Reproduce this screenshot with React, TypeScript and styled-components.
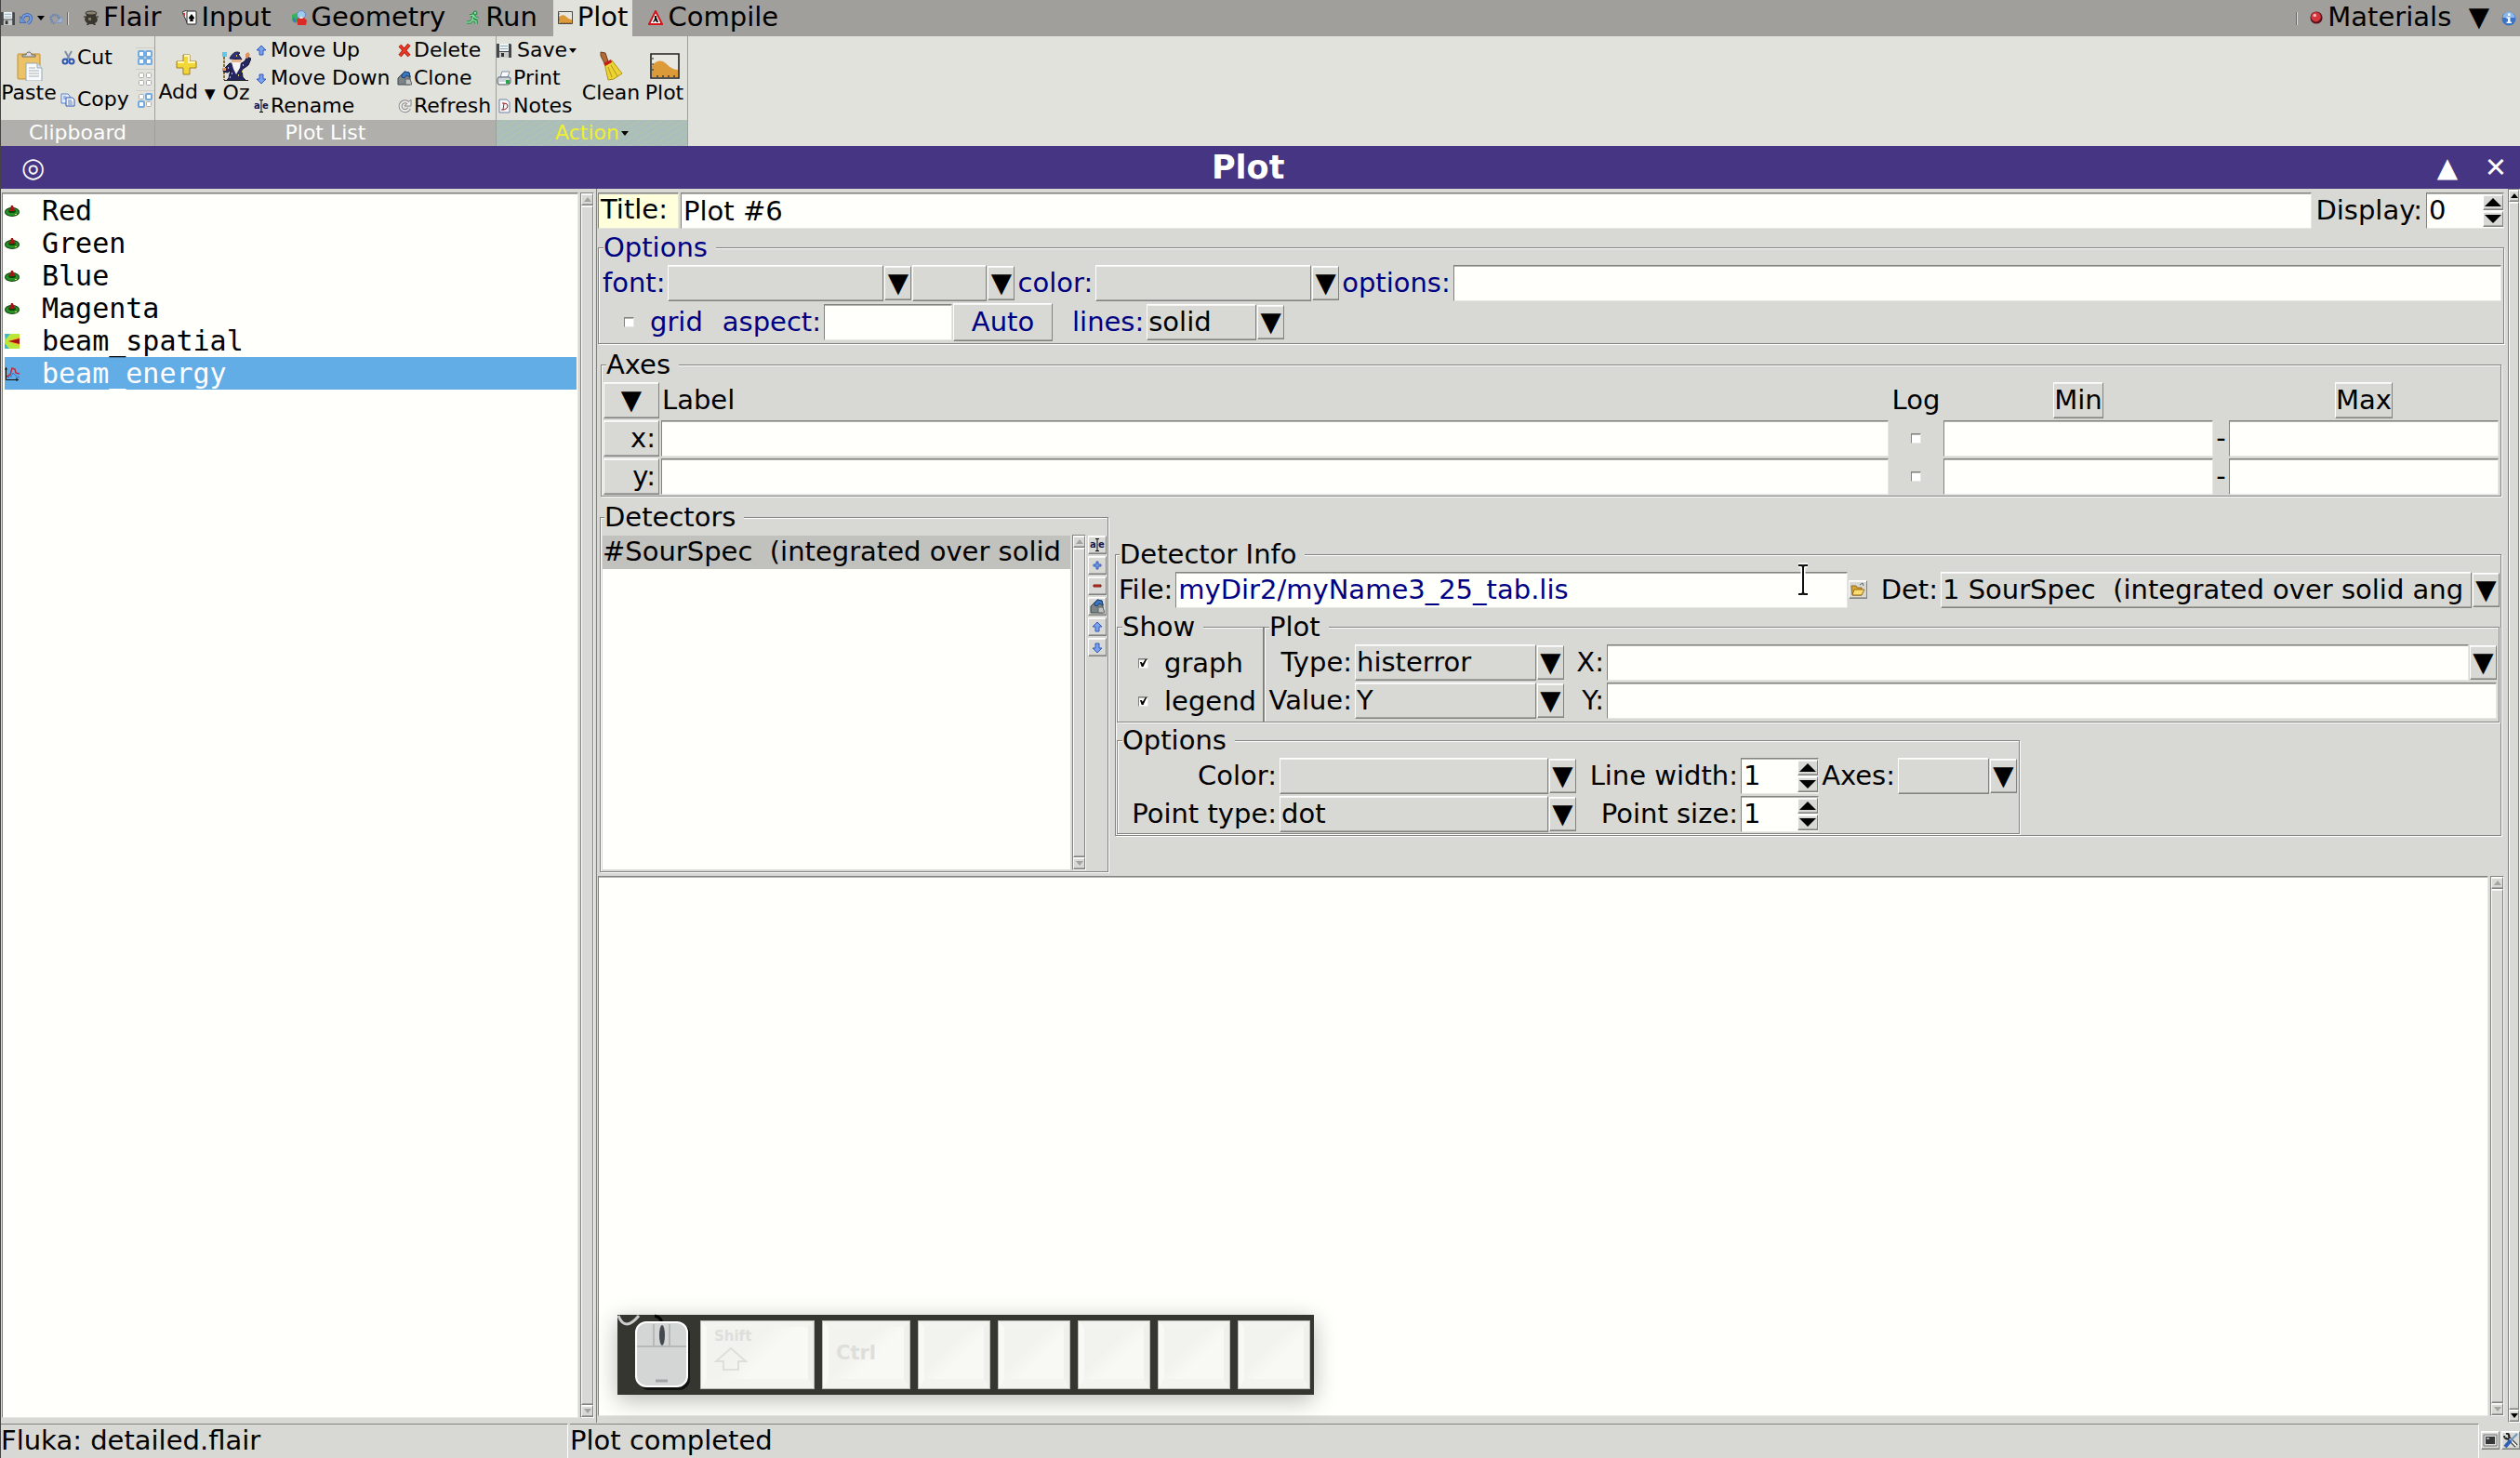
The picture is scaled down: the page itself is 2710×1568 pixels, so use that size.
import React, { useRef, useState } from 'react';
import styled, { createGlobalStyle, css } from 'styled-components';

const face = '#d8d9d5';
const paper = '#fffffb';
const dark = '#82827f';
const navy = '#000083';

const GlobalStyle = createGlobalStyle`
  * {
    box-sizing: border-box;
  }
  body {
    margin: 0;
    background: ${face};
    overflow: hidden;
  }
  body, button, input, select {
    font-family: 'DejaVu Sans', sans-serif;
    font-size: 29px;
    line-height: 35px;
    color: #000;
  }
  button, input, select, fieldset, legend, ul {
    margin: 0;
    padding: 0;
    border: 0;
    border-radius: 0;
    outline: 0;
  }
`;

const raised = css`
  border: 1px solid;
  border-color: #fff ${dark} ${dark} #fff;
  box-shadow: inset 0 1px #f4f4f2, inset 0 -1px #a5a5a2;
`;

const sunken = css`
  border: 1px solid;
  border-color: ${dark} #e6e6e2 #e6e6e2 ${dark};
  box-shadow: inset 0 1px #b4b4b0;
`;

// ------
// Layout
// ------

const Window = styled.div`
  position: relative;
  display: flex;
  flex-direction: column;
  height: 100vh;
  border-left: 1px solid #444;
  background: ${face};
  white-space: pre;
`;

const TabBar = styled.nav`
  display: flex;
  align-items: center;
  height: 39px;
  background: #a09f9b;
`;

const QuickTools = styled.div`
  display: flex;
  align-items: center;
  gap: 5px;
  width: 84px;
`;

const Tabs = styled.div`
  display: flex;
  flex: 1;
  gap: 12px;
`;

const Tab = styled.button<{ $active?: boolean }>`
  display: flex;
  align-items: center;
  gap: 5px;
  height: 39px;
  padding: 0 5px 2px;
  background: ${(p) => (p.$active ? '#e2e2dc' : 'transparent')};
`;

const ToolButton = styled.button`
  display: flex;
  background: none;
`;

const TabRule = styled.span`
  width: 2px;
  height: 14px;
  background: #666;
  border-right: 1px solid #ddd;
`;

const TabRight = styled.div`
  display: flex;
  align-items: center;
  gap: 8px;
  padding-right: 4px;
`;

const Ribbon = styled.div`
  display: flex;
  height: 118px;
  background: #e2e2dc;
`;

const Group = styled.section<{ $width: number }>`
  display: flex;
  flex-direction: column;
  width: ${(p) => p.$width}px;
  border-right: 1px solid #a09f9b;
`;

const GroupBody = styled.div`
  display: flex;
  height: 90px;
`;

const GroupLabel = styled.div<{ $hot?: boolean }>`
  display: flex;
  justify-content: center;
  align-items: center;
  gap: 2px;
  height: 28px;
  font-size: 22px;
  line-height: 26px;
  color: ${(p) => (p.$hot ? '#efef2c' : '#fff')};
  background: ${(p) =>
    p.$hot
      ? 'repeating-linear-gradient(150deg, #adbdbb 0 5px, #a9c9a9 5px 6px)'
      : '#b0afab'};
`;

const BigButton = styled.button<{ $width: number }>`
  display: flex;
  flex-direction: column;
  align-items: center;
  justify-content: center;
  width: ${(p) => p.$width}px;
  background: none;
  font-size: 22px;
  line-height: 26px;
`;

const Small = styled.small`
  font-size: 15px;
`;

const ButtonColumn = styled.div<{ $width: number }>`
  display: flex;
  flex-direction: column;
  justify-content: space-around;
  width: ${(p) => p.$width}px;
`;

const RibbonButton = styled.button`
  display: flex;
  align-items: center;
  gap: 2px;
  background: none;
  font-size: 22px;
  line-height: 26px;
`;

const SaveText = styled.span`
  padding-left: 4px;
`;

const SelectColumn = styled.div`
  display: flex;
  flex-direction: column;
  justify-content: center;
  gap: 2px;
  width: 20px;

  button {
    justify-content: center;
    border-top: 1px solid #cfcfca;
    padding: 2px 0;
  }
`;

const PageBar = styled.header`
  display: flex;
  align-items: center;
  height: 46px;
  padding: 0 10px 0 22px;
  background: #453582;
  color: #fff;
`;

const PageTitle = styled.h1`
  flex: 1;
  margin: 0;
  padding-left: 40px;
  text-align: center;
  font-size: 35px;
  line-height: 44px;
`;

const PageButton = styled.button`
  width: 32px;
  margin-left: 20px;
  background: none;
  color: #fff;
  font-weight: bold;
`;

const Main = styled.main`
  display: flex;
  flex: 1;
  min-height: 0;
`;

const PlotPane = styled.div`
  display: flex;
  flex: none;
  gap: 2px;
  width: 640px;
  padding: 4px 2px 5px 1px;
`;

const PlotList = styled.ul`
  ${sunken}
  flex: 1;
  padding: 1px 1px 1px 2px;
  background: ${paper};
  list-style: none;
  font-family: 'DejaVu Sans Mono', monospace;
  font-size: 30px;
`;

const PlotItem = styled.li<{ $selected?: boolean }>`
  display: flex;
  align-items: center;
  gap: 24px;
  height: 35px;
  color: ${(p) => (p.$selected ? '#fff' : '#000')};
  background: ${(p) => (p.$selected ? '#62ade6' : 'transparent')};
`;

const EditPane = styled.div`
  display: flex;
  flex: 1;
  flex-direction: column;
  min-width: 0;
  padding: 4px 4px 7px 1px;
  border-left: 1px solid ${dark};
`;

const Row = styled.div`
  display: flex;
  align-items: center;
  gap: 1px;
`;

const TitleRow = styled(Row)`
  gap: 2px;
  margin-bottom: 3px;
`;

const Frame = styled.fieldset<{ $navy?: boolean }>`
  min-width: 0;
  padding: 1px 2px;
  border: 1px solid ${dark};
  box-shadow: 1px 1px #fff, inset 1px 1px #fff;
  color: ${(p) => (p.$navy ? navy : '#000')};
`;

const Legend = styled.legend`
  height: 35px;
  margin-left: 3px;
  padding-right: 9px;
  background: ${face};
`;

const OptionRow = styled(Row)`
  min-height: 39px;
  margin-bottom: 1px;

  & + & {
    margin-top: 2px;
  }
`;

const Label = styled.label`
  flex: none;
  padding: 0 2px;
  color: inherit;
`;

const TitleLabel = styled(Label)`
  ${sunken}
  width: 87px;
  height: 39px;
  background: #ffffdc;
`;

const Entry = styled.input<{ $width?: number }>`
  ${sunken}
  width: ${(p) => (p.$width ? `${p.$width}px` : '100%')};
  min-width: 0;
  height: 39px;
  padding: 0 2px;
  background: ${paper};
  color: ${(p) => (p.color ? p.color : '#000')};
`;

const Button = styled.button`
  ${raised}
  height: 39px;
  background: ${face};
  color: inherit;
`;

const AutoButton = styled(Button)`
  width: 107px;
  height: 41px;
  margin-right: 18px;
`;

const AxesFrame = styled(Frame)`
  margin: 5px 3px;
`;

const AxesGrid = styled.div`
  display: grid;
  grid-template-columns: 60px 1fr 55px 290px 13px 290px;
  gap: 2px;
  align-items: center;
  justify-items: center;
`;

const AxisButton = styled(Button)`
  width: 60px;
  text-align: right;
  padding-right: 3px;
`;

const MenuButton = styled(Button)`
  width: 60px;
`;

const Heading = styled.span`
  justify-self: start;
  padding-left: 1px;
`;

const DetectorArea = styled.div`
  display: flex;
  align-items: center;
  gap: 7px;
  margin: 0 3px 4px 2px;
`;

const DetectorFrame = styled(Frame)`
  flex: 0 0 547px;
  padding: 1px;
`;

const DetectorBody = styled.div`
  display: flex;
  gap: 1px;
  height: 361px;
`;

const DetectorList = styled.ul`
  flex: 1;
  min-width: 0;
  overflow: hidden;
  background: ${paper};
  list-style: none;
  border: 1px solid ${face};
`;

const DetectorItem = styled.li`
  height: 36px;
  background: #c1c1be;
`;

const IconColumn = styled.div`
  display: flex;
  flex-direction: column;
  gap: 2px;
  padding: 1px 0 0 1px;
`;

const IconButton = styled(Button)`
  display: flex;
  flex: none;
  align-items: center;
  justify-content: center;
  width: 20px;
  height: 20px;
`;

const InfoFrame = styled(Frame)`
  flex: 1;
  padding: 1px;
`;

const FileRow = styled(Row)`
  margin-bottom: 3px;

  label + input {
    flex: 1;
  }
`;

const DetLabel = styled(Label)`
  margin-left: 12px;
`;

const FrameRow = styled.div`
  display: flex;
  margin-bottom: 2px;
`;

const ShowFrame = styled(Frame)`
  width: 158px;
  flex: none;
`;

const PlotFrame = styled(Frame)`
  flex: 1;
`;

const FieldGrid = styled.div<{ $columns: string }>`
  display: grid;
  grid-template-columns: ${(p) => p.$columns};
  column-gap: 1px;
  row-gap: 2px;
  align-items: center;

  > label {
    text-align: right;
  }
`;

const CheckRow = styled.label`
  display: flex;
  align-items: center;
  gap: 17px;
  height: 41px;
  padding-left: 20px;
`;

const GridCheck = styled(CheckRow)`
  padding-left: 25px;
  padding-right: 18px;
`;

const Check = styled.input`
  ${sunken}
  appearance: none;
  flex: none;
  width: 11px;
  height: 11px;
  background: #fff;

  &:checked::after {
    content: '';
    display: block;
    width: 9px;
    height: 9px;
    background: #000;
    clip-path: polygon(10% 40%, 30% 40%, 42% 58%, 75% 5%, 92% 5%, 50% 95%, 30% 95%);
  }
`;

const OptionsFrame = styled(Frame)`
  width: 971px;
`;

const ComboBox = styled.span<{ $width?: number }>`
  display: flex;
  flex: none;
  align-items: center;
  gap: 1px;
  width: ${(p) => (p.$width ? `${p.$width}px` : 'auto')};
`;

const ComboSelect = styled.select`
  ${raised}
  appearance: none;
  flex: 1;
  min-width: 0;
  height: 39px;
  padding: 0 1px;
  background: ${face};
  color: #000;
`;

const ArrowButton = styled(Button)`
  flex: none;
  width: 29px;
  height: 37px;
  color: #000;
`;

const SpinBox = styled.span`
  ${sunken}
  display: flex;
  flex: none;
  width: 84px;
  height: 39px;
  background: ${paper};
`;

const SpinInput = styled.input`
  appearance: textfield;
  flex: 1;
  min-width: 0;
  padding-left: 2px;
  background: none;

  &::-webkit-inner-spin-button {
    appearance: none;
  }
`;

const SpinButtons = styled.span`
  display: flex;
  flex-direction: column;
  justify-content: space-evenly;
`;

const SpinButton = styled(Button)`
  display: flex;
  align-items: center;
  justify-content: center;
  width: 22px;
  height: 17px;
`;

const Output = styled.div`
  display: flex;
  flex: 1;
  gap: 2px;
  min-height: 0;
`;

const OutputText = styled.div`
  ${sunken}
  flex: 1;
  background: ${paper};
`;

const Bar = styled.div<{ $narrow?: boolean }>`
  display: flex;
  flex: none;
  flex-direction: column;
  width: ${(p) => (p.$narrow ? 13 : 15)}px;
  border: 1px solid ${dark};
  border-right-color: #fff;
  border-bottom-color: #fff;
`;

const BarButton = styled.button`
  ${raised}
  display: flex;
  align-items: center;
  justify-content: center;
  height: 13px;
  background: ${face};
`;

const Thumb = styled.div`
  ${raised}
  flex: 1;
`;

const StatusBar = styled.footer`
  display: flex;
  align-items: center;
  gap: 2px;
  height: 38px;
`;

const StatusCell = styled.div<{ $width?: number }>`
  flex: ${(p) => (p.$width ? `0 0 ${p.$width}px` : 1)};
  height: 37px;
  border-top: 1px solid ${dark};
  border-right: 1px solid #fff;
`;

const KeyStrip = styled.div`
  position: absolute;
  left: 663px;
  bottom: 68px;
  display: flex;
  align-items: center;
  gap: 10px;
  height: 86px;
  padding: 0 5px 0 16px;
  background: #353630;
  box-shadow: 0 6px 24px rgba(0, 0, 0, 0.28);
`;

const Key = styled.div<{ $width: number }>`
  display: flex;
  flex-direction: column;
  justify-content: center;
  width: ${(p) => p.$width}px;
  height: 72px;
  padding: 0 0 6px 8px;
  border: 6px solid;
  border-color: #f3f3f0 #efefec #f3f3f0 #f8f8f5;
  border-bottom-width: 10px;
  background: linear-gradient(135deg, #f2f2ef 40%, #f8f8f5 60%);
  outline: 1px solid #b9b9b5;
  color: #dededb;
  font-size: 15px;
  line-height: 16px;
  font-weight: bold;
`;

const CtrlText = styled.span`
  padding-top: 6px;
  font-size: 21px;
  line-height: 24px;
`;

const Pointer = styled.svg`
  position: absolute;
  left: 1930px;
  top: 605px;
`;

// -----
// Icons
// -----

const icons: { [name: string]: React.ReactNode } = {
  save: (
    <>
      <path d="M0 1h15l1 1v14H0z" fill="#45484a" />
      <path d="M3 1h10v8H3z" fill="#eef3f5" />
      <path d="M4 3.500h8M4 6.500h8" stroke="#8fa6b5" />
      <path d="M3 10h10v6H3z" fill="#c9cbcb" />
      <path d="M5 11h3v4H5z" fill="#333" />
    </>
  ),
  undo: (
    <>
      <path d="M4 8c1-6 9-6 10-1 0 3-1 5-4 7" fill="none" stroke="#3c62b4" strokeWidth="4" />
      <path d="M4 8c1-6 9-6 10-1 0 3-1 5-4 7" fill="none" stroke="#7aa0e2" strokeWidth="2" />
      <path d="M0 5v8h8z" fill="#6f97dc" stroke="#3c62b4" />
    </>
  ),
  redo: (
    <>
      <path d="M12 8c-1-6-9-6-10-1 0 3 1 5 4 7" fill="none" stroke="#6484b9" strokeWidth="3" strokeDasharray="2 1" />
      <path d="M16 5v8H8z" fill="#a5b4cd" stroke="#6484b9" strokeDasharray="2 1" />
    </>
  ),
  pot: (
    <>
      <path d="M2 3h12l-1 3c3 3 2 7-1 8l1 2h-2l-1-1H6l-1 1H3l1-2C1 12 0 9 3 6z" fill="#38362d" />
      <ellipse cx="8" cy="3" rx="6" ry="2" fill="#8a836b" stroke="#333" />
      <path d="M5 8h3v3H5z" fill="#837d63" />
      <path d="M0 7h2M14 7h2" stroke="#222" />
    </>
  ),
  cards: (
    <>
      <path d="M0 2l5-2 6 12-5 3z" fill="#f3f3f3" stroke="#333" />
      <path d="M1 3h2v3H1z" fill="#d33" />
      <rect x="5" y="1" width="10" height="14" rx="1" fill="#fff" stroke="#222" />
      <path d="M10 4l3 4c0 2-2 2-2 1l1 3H8l1-3c0 1-2 1-2-1z" fill="#000" />
    </>
  ),
  geometry: (
    <>
      <path d="M0 5l5-2 3 2v7l-4 1-4-2z" fill="#35b25b" />
      <circle cx="10" cy="5" r="4.500" fill="#9fc9ee" stroke="#5a8fc7" />
      <path d="M5 9l8-1 3 3-1 5H6z" fill="#dc2a26" />
      <path d="M1 7l3 3v4l-3-2z" fill="#3d74d6" />
      <path d="M8 9l2-3 2 3z" fill="#f6e3e0" />
    </>
  ),
  run: (
    <>
      <circle cx="10" cy="3" r="2" fill="#7ee09a" stroke="#1c7a3c" />
      <path d="M4 6l4-1 2 3 3 1M8 6l-1 4 4 2v3M7 10l-2 3H1" fill="none" stroke="#1c7a3c" strokeWidth="3" />
      <path d="M4 6l4-1 2 3 3 1M8 6l-1 4 4 2v3M7 10l-2 3H1" fill="none" stroke="#7ee09a" strokeWidth="1.500" />
    </>
  ),
  plot: (
    <>
      <path d="M.5 1.500h15v13H.5z" fill="#e8e7e0" stroke="#222" strokeWidth=".8" />
      <path d="M1 8c2-3 5-4 8-1 2 2 4 3 6 3v4H1z" fill="#dc9a38" />
      <path d="M1 4h1M1 7h1M1 10h1M4 14v-1M7 14v-1M10 14v-1M13 14v-1" stroke="#222" strokeWidth=".6" />
    </>
  ),
  compile: (
    <>
      <path d="M8 1l7 14H1z" fill="#fff" stroke="#d3161b" strokeWidth="2" />
      <path d="M7 6h2v2l1 2 1 3H9l-1-2-2 2H5l2-4z" fill="#111" />
    </>
  ),
  ball: (
    <>
      <circle cx="8" cy="8" r="7.500" fill="#56131b" />
      <circle cx="7.500" cy="7" r="6" fill="#d5353d" />
      <circle cx="6" cy="5" r="2" fill="#ffb9b9" />
    </>
  ),
  info: (
    <>
      <circle cx="8" cy="8" r="7.500" fill="#3b73c6" />
      <path d="M1.500 7a6.500 6.500 0 0 1 13 0z" fill="#8fb8e8" />
      <path d="M7 2.500h2.500V5H7zM5.500 6.500h4v5H11v1.500H5.500v-1.500H7V8H5.500z" fill="#fff" />
    </>
  ),
  paste: (
    <>
      <rect x="4" y="3" width="24" height="27" rx="1" fill="#ecc268" stroke="#c58e33" />
      <path d="M9 6V4h4c0-4 6-4 6 0h4v2z" fill="#ddd" stroke="#666" />
      <path d="M13 13h12l5 5v14H13z" fill="#f8fbfd" stroke="#93a7b7" />
      <path d="M25 13v5h5" fill="#dbe6ef" stroke="#93a7b7" />
      <path d="M16 18h7M16 21h11M16 24h11M16 27h11" stroke="#a8adb1" />
    </>
  ),
  cut: (
    <>
      <path d="M5 1l5 9M12 1l-5 9" stroke="#7d8fa6" strokeWidth="2" />
      <circle cx="5" cy="12" r="2.500" fill="none" stroke="#2e55b0" strokeWidth="2" />
      <circle cx="12" cy="12" r="2.500" fill="none" stroke="#2e55b0" strokeWidth="2" />
    </>
  ),
  copy: (
    <>
      <path d="M1 2h7l2 2v8H1z" fill="#e6eefb" stroke="#5a7fc4" />
      <path d="M6 6h7l2 2v7H6z" fill="#f2f6fd" stroke="#2f57b2" />
      <path d="M3 5h3M3 7h3M8 9h4M8 11h5M8 13h5" stroke="#5a7fc4" />
    </>
  ),
  selectAll: (
    <g fill="#fff" stroke="#72a9de" strokeWidth="2">
      <rect x="1" y="1" width="6" height="6" rx="1" />
      <rect x="9" y="1" width="6" height="6" rx="1" />
      <rect x="1" y="9" width="6" height="6" rx="1" />
      <rect x="9" y="9" width="6" height="6" rx="1" />
    </g>
  ),
  selectNone: (
    <g fill="#fff" stroke="#aaa">
      <rect x="1.500" y="1.500" width="5" height="5" rx="1" />
      <rect x="9.500" y="1.500" width="5" height="5" rx="1" />
      <rect x="1.500" y="9.500" width="5" height="5" rx="1" />
      <rect x="9.500" y="9.500" width="5" height="5" rx="1" />
    </g>
  ),
  selectInvert: (
    <g fill="#fff">
      <rect x="1.500" y="1.500" width="5" height="5" rx="1" stroke="#aaa" />
      <rect x="9" y="1" width="6" height="6" rx="1" stroke="#72a9de" strokeWidth="2" />
      <rect x="1" y="9" width="6" height="6" rx="1" stroke="#72a9de" strokeWidth="2" />
      <rect x="9.500" y="9.500" width="5" height="5" rx="1" stroke="#aaa" />
    </g>
  ),
  add: (
    <>
      <path d="M12 5h7v7h7v7h-7v7h-7v-7H5v-7h7z" fill="#f2d837" stroke="#a07b1c" />
      <path d="M13 6h5v7h7M6 13h7" fill="none" stroke="#fff7b5" strokeWidth="2" />
    </>
  ),
  wizard: (
    <>
      <path d="M3 6v25" stroke="#86713a" strokeWidth="2" strokeDasharray="3 1" />
      <path d="M1 1h5v5H1z" fill="#5cc8ee" />
      <path d="M9 8c2-5 7-9 11-6l-2 1 4 6z" fill="#30307a" stroke="#14143a" />
      <path d="M11 9h10v5H11z" fill="#e8b48e" />
      <path d="M9 13l-5 5-2 4 5 1 3-3-2 9-3 3h22l-4-4-1-8 7-5 3-7-4-2-3 5-5 3z" fill="#26265f" stroke="#111133" />
      <path d="M11 12h10l-1 6-4 7-3-6z" fill="#f4f4f4" />
      <path d="M26 3l3-2 2 3-3 4-2-1zM1 18h4v3H1z" fill="#e0935f" />
      <path d="M11 24h1M18 26h1M9 28h1M22 22h1M7 18h1M23 15h1M16 5h1" stroke="#d9c748" strokeWidth="2" />
      <path d="M3 31.500h26" stroke="#222" />
    </>
  ),
  up: <path d="M8 3l5 5h-3v5H6V8H3z" fill="#79a2ee" stroke="#3358ba" />,
  down: <path d="M8 14l5-5h-3V4H6v5H3z" fill="#79a2ee" stroke="#3358ba" />,
  rename: (
    <>
      <path d="M8 2v12M6 1.500h4M6 14.500h4" stroke="#000" />
      <text x="0" y="11" fontSize="10" fontWeight="bold" fill="#15154e">a</text>
      <text x="9" y="11" fontSize="10" fontWeight="bold" fill="#15154e">e</text>
    </>
  ),
  remove: (
    <>
      <path d="M3 3l10 11M13 2L3 14" stroke="#a91c10" strokeWidth="4" />
      <path d="M3 3l10 11M13 2L3 14" stroke="#ef3b23" strokeWidth="2" />
    </>
  ),
  clone: (
    <>
      <path d="M5 4l3-3 5 1 1 4v9H1V8z" fill="#7d8588" stroke="#3d464b" />
      <path d="M5 5l3-4 5 1 1 5-4-2-2 3-3-1z" fill="#3979c4" stroke="#1d4175" />
      <path d="M9 9h5l2 6H9z" fill="#bfc3c1" stroke="#5d6262" />
    </>
  ),
  refresh: (
    <>
      <path d="M12 4.500a5 5 0 1 0 1 6" fill="none" stroke="#858585" strokeWidth="4" />
      <path d="M15 1v7H8z" fill="#eee" stroke="#858585" />
      <path d="M12 4.500a5 5 0 1 0 1 6" fill="none" stroke="#eee" strokeWidth="2" />
    </>
  ),
  print: (
    <>
      <path d="M6 1h8l-2 6H4z" fill="#fdfdfd" stroke="#7690b0" />
      <path d="M2 7h12l1 1v5l-2 2H2l-1-2V9z" fill="#ced4da" stroke="#596673" />
      <path d="M3 12h7v2H3z" fill="#fff" />
      <path d="M10 10h4v4h-4z" fill="#27a844" />
    </>
  ),
  notes: (
    <>
      <path d="M3 1h8l3 3v11H3z" fill="#f6f8fc" stroke="#6e83a8" />
      <path d="M6 5h2q4 0 4 3t-4 4H5M8 5l-1 7" fill="none" stroke="#9c1d1d" />
    </>
  ),
  broom: (
    <>
      <path d="M5 1l5 1 3 9-4 2-4-8z" fill="#b06a35" stroke="#6d3d1a" />
      <path d="M9 13l8-3 11 14-9 6-6 1z" fill="#ecd335" stroke="#b39417" />
      <path d="M8 13l8-4 1 3-7 4z" fill="#c51d1d" />
      <path d="M13 17l4 11M16 15l7 12" stroke="#b39417" />
    </>
  ),
  usrbin: (
    <>
      <ellipse cx="8" cy="9" rx="8" ry="5" fill="#0c390c" />
      <ellipse cx="8" cy="9" rx="7" ry="4" fill="#259225" />
      <ellipse cx="8" cy="8" rx="4" ry="2" fill="#0c440c" />
      <path d="M7 2h2l2 6H5z" fill="#a31616" />
      <path d="M11 11h2v1h-2z" fill="#d7e84a" />
    </>
  ),
  spatial: (
    <>
      <path d="M0 0h16v16H0z" fill="#b9e63b" />
      <path d="M0 0h6L1 6zM0 10l5 6H0z" fill="#40b7c6" />
      <path d="M3 8l13-5v10z" fill="#f2bb24" />
      <path d="M4 8l12-3v6z" fill="#a51414" />
    </>
  ),
  energy: (
    <>
      <path d="M1.500 1v13.500H15M13 12v4M0 3h3" fill="none" stroke="#111" />
      <path d="M2 11l4-2 2-7 3 1 1 4 4 1" fill="none" stroke="#c5283a" strokeWidth="1.500" />
      <path d="M3 12l4-1 2-4 3 3 4 2" fill="none" stroke="#3458c8" strokeDasharray="2 1" />
    </>
  ),
  plus: <path d="M7 4h2v3h3v2H9v3H7V9H4V7h3z" fill="#79a2ee" stroke="#3358ba" />,
  minus: <path d="M4 7h8v2H4z" fill="#d33c2a" stroke="#7d120d" />,
  folder: (
    <>
      <path d="M1 4h5l1 2h5v8H2z" fill="#d9a535" stroke="#94691a" />
      <path d="M4 8h11l-3 6H2z" fill="#fbdd72" stroke="#94691a" />
      <path d="M10 3l3-2 1 3" fill="none" stroke="#567" />
    </>
  ),
  screen: (
    <>
      <path d="M1 2h14v12H1z" fill="#ddd" stroke="#777" />
      <path d="M3 4h10v8H3z" fill="#353737" />
      <path d="M4 5h3v2H4z" fill="#a4a8a8" />
    </>
  ),
  tools: (
    <>
      <path d="M4 4l10 10" stroke="#222" strokeWidth="4" />
      <path d="M4 4l10 10" stroke="#fff" strokeWidth="2" />
      <path d="M1 3c0 3 2 4 5 3M3 1c3-1 4 2 3 5" fill="none" stroke="#222" strokeWidth="2" />
      <path d="M15 1L8 8" stroke="#6c94bb" strokeWidth="2" />
      <path d="M8 8l-6 7" stroke="#2f5fb5" strokeWidth="4" />
    </>
  ),
};

function Icon({ name, size = 16 }: { name: string; size?: number }) {
  const big = ['paste', 'add', 'wizard', 'broom'].includes(name);
  return (
    <svg width={size} height={size} viewBox={big ? '0 0 32 32' : '0 0 16 16'} aria-hidden="true">
      {icons[name]}
    </svg>
  );
}

type TriangleProps = { up?: boolean; width?: number; height?: number; color?: string };

function Triangle({ up, width = 8, height = 5, color = '#000' }: TriangleProps) {
  return (
    <svg width={width} height={height} viewBox="0 0 10 10" preserveAspectRatio="none" aria-hidden="true">
      <path d={up ? 'M5 0l5 10H0z' : 'M0 0h10L5 10z'} fill={color} />
    </svg>
  );
}

// -------
// Widgets
// -------

type ComboProps = { id: string; label?: string; value?: string; width?: number };

function Combo({ id, label, value = '', width }: ComboProps) {
  const select = useRef<HTMLSelectElement>(null);

  return (
    <ComboBox $width={width}>
      <ComboSelect id={id} ref={select} aria-label={label}>
        <option>{value}</option>
      </ComboSelect>
      <ArrowButton aria-label="Open list" onClick={() => select.current?.showPicker()}>
        ▼
      </ArrowButton>
    </ComboBox>
  );
}

function Spin({ id, start }: { id: string; start: number }) {
  const [value, setValue] = useState(start);

  return (
    <SpinBox>
      <SpinInput id={id} type="number" value={value} onChange={(e) => setValue(Number(e.target.value))} />
      <SpinButtons>
        <SpinButton aria-label="Increase" onClick={() => setValue(value + 1)}>
          <Triangle up width={18} height={9} />
        </SpinButton>
        <SpinButton aria-label="Decrease" onClick={() => setValue(value - 1)}>
          <Triangle width={18} height={9} />
        </SpinButton>
      </SpinButtons>
    </SpinBox>
  );
}

function ScrollBar({ enabled }: { enabled?: boolean }) {
  const color = enabled ? '#000' : '#a3a3a0';
  return (
    <Bar $narrow={enabled}>
      <BarButton aria-label="Scroll up" disabled={!enabled}>
        <Triangle up color={color} />
      </BarButton>
      <Thumb />
      <BarButton aria-label="Scroll down" disabled={!enabled}>
        <Triangle color={color} />
      </BarButton>
    </Bar>
  );
}

function Tool({ icon, text }: { icon: string; text: string }) {
  return (
    <RibbonButton>
      <Icon name={icon} />
      {text}
    </RibbonButton>
  );
}

function Axis({ name }: { name: string }) {
  return (
    <>
      <AxisButton>{name}:</AxisButton>
      <Entry aria-label={`${name} label`} />
      <Check type="checkbox" aria-label={`${name} log`} />
      <Entry aria-label={`${name} min`} />
      <span>-</span>
      <Entry aria-label={`${name} max`} />
    </>
  );
}

const tabs = [
  ['pot', 'Flair'],
  ['cards', 'Input'],
  ['geometry', 'Geometry'],
  ['run', 'Run'],
  ['plot', 'Plot'],
  ['compile', 'Compile'],
];

const plots = [
  ['usrbin', 'Red'],
  ['usrbin', 'Green'],
  ['usrbin', 'Blue'],
  ['usrbin', 'Magenta'],
  ['spatial', 'beam_spatial'],
  ['energy', 'beam_energy'],
];

const detectorTools = ['rename', 'plus', 'minus', 'clone', 'up', 'down'];

function Header() {
  return (
    <>
      <TabBar>
        <QuickTools>
          <ToolButton aria-label="Save"><Icon name="save" size={15} /></ToolButton>
          <ToolButton aria-label="Undo"><Icon name="undo" size={14} /></ToolButton>
          <Triangle />
          <ToolButton aria-label="Redo"><Icon name="redo" size={14} /></ToolButton>
          <TabRule />
        </QuickTools>
        <Tabs>
          {tabs.map(([icon, name]) => (
            <Tab key={name} $active={name === 'Plot'}>
              <Icon name={icon} />
              {name}
            </Tab>
          ))}
        </Tabs>
        <TabRight>
          <TabRule />
          <Tab>
            <Icon name="ball" size={14} />
            {'Materials  ▼'}
          </Tab>
          <ToolButton aria-label="Info"><Icon name="info" /></ToolButton>
        </TabRight>
      </TabBar>
      <Ribbon>
        <Group $width={166}>
          <GroupBody>
            <BigButton $width={60}>
              <Icon name="paste" size={32} />
              Paste
            </BigButton>
            <SaveText />
            <ButtonColumn $width={81}>
              <Tool icon="cut" text="Cut" />
              <Tool icon="copy" text="Copy" />
            </ButtonColumn>
            <SelectColumn>
              <ToolButton aria-label="Select all"><Icon name="selectAll" /></ToolButton>
              <ToolButton aria-label="Select none"><Icon name="selectNone" /></ToolButton>
              <ToolButton aria-label="Invert selection"><Icon name="selectInvert" /></ToolButton>
            </SelectColumn>
          </GroupBody>
          <GroupLabel>Clipboard</GroupLabel>
        </Group>
        <Group $width={367}>
          <GroupBody>
            <BigButton $width={68}>
              <Icon name="add" size={32} />
              <span>Add <Small>▼</Small></span>
            </BigButton>
            <BigButton $width={38}>
              <Icon name="wizard" size={32} />
              Oz
            </BigButton>
            <ButtonColumn $width={154}>
              <Tool icon="up" text="Move Up" />
              <Tool icon="down" text="Move Down" />
              <Tool icon="rename" text="Rename" />
            </ButtonColumn>
            <ButtonColumn $width={104}>
              <Tool icon="remove" text="Delete" />
              <Tool icon="clone" text="Clone" />
              <Tool icon="refresh" text="Refresh" />
            </ButtonColumn>
          </GroupBody>
          <GroupLabel>Plot List</GroupLabel>
        </Group>
        <Group $width={206}>
          <GroupBody>
            <ButtonColumn $width={90}>
              <RibbonButton>
                <Icon name="save" />
                <SaveText>Save</SaveText>
                <Triangle />
              </RibbonButton>
              <Tool icon="print" text="Print" />
              <Tool icon="notes" text="Notes" />
            </ButtonColumn>
            <BigButton $width={66}>
              <Icon name="broom" size={32} />
              Clean
            </BigButton>
            <BigButton $width={49}>
              <Icon name="plot" size={32} />
              Plot
            </BigButton>
          </GroupBody>
          <GroupLabel $hot>
            Action
            <Triangle />
          </GroupLabel>
        </Group>
      </Ribbon>
    </>
  );
}

function DetectorInfo() {
  return (
    <InfoFrame>
      <Legend>Detector Info</Legend>
      <FileRow>
        <Label htmlFor="file">File:</Label>
        <Entry id="file" color={navy} defaultValue="myDir2/myName3_25_tab.lis" />
        <IconButton aria-label="Open file"><Icon name="folder" /></IconButton>
        <DetLabel htmlFor="det">Det:</DetLabel>
        <Combo id="det" value={'1 SourSpec\u00a0 (integrated over solid ang'} width={601} />
      </FileRow>
      <FrameRow>
        <ShowFrame>
          <Legend>Show</Legend>
          <CheckRow><Check type="checkbox" defaultChecked />graph</CheckRow>
          <CheckRow><Check type="checkbox" defaultChecked />legend</CheckRow>
        </ShowFrame>
        <PlotFrame>
          <Legend>Plot</Legend>
          <FieldGrid $columns="94px 225px 44px 1fr">
            <Label htmlFor="type">Type:</Label>
            <Combo id="type" value="histerror" />
            <Label htmlFor="xExpr">X:</Label>
            <Row>
              <Entry id="xExpr" />
              <ArrowButton aria-label="X list">▼</ArrowButton>
            </Row>
            <Label htmlFor="value">Value:</Label>
            <Combo id="value" value="Y" />
            <Label htmlFor="yExpr">Y:</Label>
            <Entry id="yExpr" />
          </FieldGrid>
        </PlotFrame>
      </FrameRow>
      <OptionsFrame>
        <Legend>Options</Legend>
        <FieldGrid $columns="171px 319px 175px 84px 83px 1fr">
          <Label htmlFor="lineColor">Color:</Label>
          <Combo id="lineColor" />
          <Label htmlFor="lineWidth">Line width:</Label>
          <Spin id="lineWidth" start={1} />
          <Label htmlFor="axes">Axes:</Label>
          <Combo id="axes" />
          <Label htmlFor="pointType">Point type:</Label>
          <Combo id="pointType" value="dot" />
          <Label htmlFor="pointSize">Point size:</Label>
          <Spin id="pointSize" start={1} />
        </FieldGrid>
      </OptionsFrame>
    </InfoFrame>
  );
}

function Keys() {
  return (
    <KeyStrip>
      <svg width="64" height="86" viewBox="0 0 64 86" aria-hidden="true" overflow="visible">
        <path d="M-15 1q7 18 22 0" fill="none" stroke="#ccc" strokeWidth="3" />
        <path d="M24 1q8 2 8 10" fill="none" stroke="#000" strokeWidth="3" />
        <rect x="6" y="9" width="56" height="72" rx="12" fill="#111" />
        <rect x="4" y="8" width="55" height="69" rx="11" fill="#d4d6d6" stroke="#fff" strokeWidth="2" />
        <path d="M5 34h53M23 10v24M40 10v24" stroke="#b4b9b9" strokeWidth="2" />
        <ellipse cx="32" cy="22" rx="3" ry="11" fill="#44494d" />
        <path d="M25 71h13" stroke="#a0a5a5" strokeWidth="3" />
      </svg>
      <Key $width={121}>
        Shift
        <svg width="36" height="30" viewBox="0 0 36 30" aria-hidden="true">
          <path d="M18 5L34 19h-8v9H10v-9H2z" fill="none" stroke="#dededb" strokeWidth="2" />
        </svg>
      </Key>
      <Key $width={93}><CtrlText>Ctrl</CtrlText></Key>
      <Key $width={76} />
      <Key $width={76} />
      <Key $width={76} />
      <Key $width={76} />
      <Key $width={76} />
    </KeyStrip>
  );
}

export default function App() {
  return (
    <Window>
      <GlobalStyle />
      <Header />
      <PageBar>
        <span>◎</span>
        <PageTitle>Plot</PageTitle>
        <PageButton aria-label="Maximize">▲</PageButton>
        <PageButton aria-label="Close">✕</PageButton>
      </PageBar>
      <Main>
        <PlotPane>
          <PlotList>
            {plots.map(([icon, name]) => (
              <PlotItem key={name} $selected={name === 'beam_energy'}>
                <Icon name={icon} />
                {name}
              </PlotItem>
            ))}
          </PlotList>
          <ScrollBar />
        </PlotPane>
        <EditPane>
          <TitleRow>
            <TitleLabel htmlFor="title">Title:</TitleLabel>
            <Entry id="title" defaultValue="Plot #6" />
            <Label htmlFor="display">Display:</Label>
            <Spin id="display" start={0} />
          </TitleRow>
          <Frame $navy>
            <Legend>Options</Legend>
            <OptionRow>
              <Label htmlFor="font">font:</Label>
              <Combo id="font" width={262} />
              <Combo id="fontSize" label="font size" width={110} />
              <Label htmlFor="color">color:</Label>
              <Combo id="color" width={262} />
              <Label htmlFor="options">options:</Label>
              <Entry id="options" />
            </OptionRow>
            <OptionRow>
              <GridCheck><Check type="checkbox" />grid</GridCheck>
              <Label htmlFor="aspect">aspect:</Label>
              <Entry id="aspect" $width={138} />
              <AutoButton>Auto</AutoButton>
              <Label htmlFor="lines">lines:</Label>
              <Combo id="lines" value="solid" width={148} />
            </OptionRow>
          </Frame>
          <AxesFrame>
            <Legend>Axes</Legend>
            <AxesGrid>
              <MenuButton aria-label="Axes menu">▼</MenuButton>
              <Heading>Label</Heading>
              <span>Log</span>
              <Button>Min</Button>
              <span />
              <Button>Max</Button>
              <Axis name="x" />
              <Axis name="y" />
            </AxesGrid>
          </AxesFrame>
          <DetectorArea>
            <DetectorFrame>
              <Legend>Detectors</Legend>
              <DetectorBody>
                <DetectorList>
                  <DetectorItem>#SourSpec  (integrated over solid</DetectorItem>
                </DetectorList>
                <ScrollBar />
                <IconColumn>
                  {detectorTools.map((name) => (
                    <IconButton key={name} aria-label={name}>
                      <Icon name={name} />
                    </IconButton>
                  ))}
                </IconColumn>
              </DetectorBody>
            </DetectorFrame>
            <DetectorInfo />
          </DetectorArea>
          <Output>
            <OutputText />
            <ScrollBar />
          </Output>
        </EditPane>
        <ScrollBar enabled />
      </Main>
      <StatusBar>
        <StatusCell $width={610}>Fluka: detailed.flair</StatusCell>
        <StatusCell>Plot completed</StatusCell>
        <IconButton aria-label="Output"><Icon name="screen" /></IconButton>
        <IconButton aria-label="Preferences"><Icon name="tools" /></IconButton>
      </StatusBar>
      <Keys />
      <Pointer width="16" height="38" viewBox="0 0 16 38" aria-hidden="true">
        <path d="M3 3h4l1 2 1-2h4M8 4v28M3 34h4l1-2 1 2h4" fill="none" stroke="#fff" strokeWidth="5" />
        <path d="M3 3h4l1 2 1-2h4M8 4v28M3 34h4l1-2 1 2h4" fill="none" stroke="#111" strokeWidth="2" />
      </Pointer>
    </Window>
  );
}
